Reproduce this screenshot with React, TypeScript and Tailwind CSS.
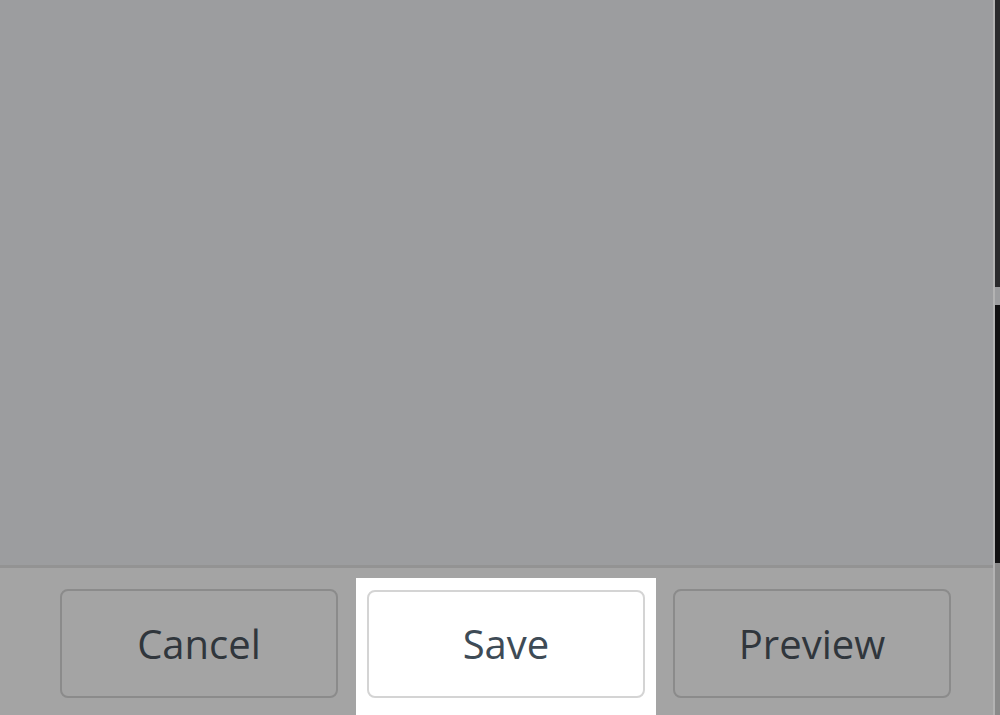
import React from 'react';

const btnText = "text-[40px] leading-none font-['Open_Sans',sans-serif]";

const App: React.FC = () => {
  return (
    <div className="w-[1000px] h-[715px] flex bg-[#a3a3a3] overflow-hidden">
      <div className="flex-1 flex flex-col">
        {/* canvas area */}
        <div className="h-[565px] bg-[#9c9d9f]"></div>
        <div className="h-[3px] bg-[#939393]"></div>

        {/* footer actions */}
        <div className="flex-1 flex items-start pl-[60px] bg-[#a4a4a4]">
          <button className="mt-[21px] w-[278px] h-[109px] rounded-[8px] border-2 border-[#8b8b8b] flex items-center justify-center">
            <span className={`${btnText} text-[#30363c]`}>Cancel</span>
          </button>
          <div className="ml-[18px] mt-[10px] w-[300px] self-stretch bg-white px-[11px] pt-[12px]">
            <button className="w-full h-[108px] rounded-[8px] border-2 border-[#d4d4d4] flex items-center justify-center">
              <span className={`${btnText} text-[#3e4b56]`}>Save</span>
            </button>
          </div>
          <button className="ml-[17px] mt-[21px] w-[278px] h-[109px] rounded-[8px] border-2 border-[#8b8b8b] flex items-center justify-center">
            <span className={`${btnText} text-[#30363c]`}>Preview</span>
          </button>
        </div>
      </div>

      {/* right edge */}
      <div className="w-[7px] flex">
        <div className="w-[2px] bg-[#b3b3b3]"></div>
        <div className="flex-1 flex flex-col">
          <div className="h-[287px] bg-[#2a2a2c]"></div>
          <div className="h-[18px] bg-[#9c9d9f]"></div>
          <div className="h-[258px] bg-[#111112]"></div>
          <div className="flex-1 bg-[#8a8a8a]"></div>
        </div>
      </div>
    </div>
  );
};

export default App;
